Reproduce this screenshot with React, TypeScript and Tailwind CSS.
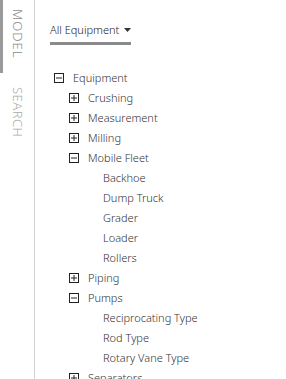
import { ReactNode } from "react";

type Node = { name: string; children?: Node[]; open?: boolean };

const TREE: Node = {
  name: "Equipment",
  open: true,
  children: [
    { name: "Crushing", children: [] },
    { name: "Measurement", children: [] },
    { name: "Milling", children: [] },
    {
      name: "Mobile Fleet",
      open: true,
      children: [
        { name: "Backhoe" },
        { name: "Dump Truck" },
        { name: "Grader" },
        { name: "Loader" },
        { name: "Rollers" },
      ],
    },
    { name: "Piping", children: [] },
    {
      name: "Pumps",
      open: true,
      children: [
        { name: "Reciprocating Type" },
        { name: "Rod Type" },
        { name: "Rotary Vane Type" },
      ],
    },
    { name: "Separators", children: [] },
  ],
};

function Toggle({ open }: { open: boolean }) {
  return (
    <svg width="10" height="10" viewBox="0 0 10 10" className="shrink-0">
      <rect x="0.5" y="0.5" width="9" height="9" fill="white" stroke="#222" />
      <line x1="2" y1="5" x2="8" y2="5" stroke="#222" />
      {!open && <line x1="5" y1="2" x2="5" y2="8" stroke="#222" />}
    </svg>
  );
}

function TreeNode({ node }: { node: Node }): ReactNode {
  const hasKids = node.children !== undefined;
  return (
    <li>
      <div className="flex items-center h-5 gap-[9px]">
        {hasKids ? <Toggle open={!!node.open} /> : <span className="w-[10px] shrink-0" />}
        <span className="text-[11px] font-light text-[#333] whitespace-nowrap">{node.name}</span>
      </div>
      {node.open && node.children && (
        <ul className="pl-[15px]">
          {node.children.map((c) => (
            <TreeNode key={c.name} node={c} />
          ))}
        </ul>
      )}
    </li>
  );
}

export default function App() {
  return (
    <div
      className="w-[286px] h-[379px] flex bg-white overflow-hidden"
      style={{ fontFamily: '"Segoe UI", "Noto Sans", sans-serif' }}
    >
      {/* side tabs */}
      <div className="w-[35px] shrink-0 border-r border-[#d4d4d4] flex flex-col">
        <div className="relative h-[74px] flex justify-center pt-[9px]">
          <div className="absolute left-0 top-0 w-[3px] h-[73px] bg-[#9a9a9a]" />
          <span className="[writing-mode:vertical-rl] text-[13px] font-light tracking-[1px] text-[#8a8a8a]">MODEL</span>
        </div>
        <div className="flex justify-center pt-[13px]">
          <span className="[writing-mode:vertical-rl] text-[13px] font-light tracking-[0.5px] text-[#aaa]">SEARCH</span>
        </div>
      </div>

      {/* content */}
      <div className="flex-1 pl-[15px] pt-[21px]">
        <div className="flex items-center gap-[5px] h-[18px]">
          <span className="text-[11px] font-light text-[#222] whitespace-nowrap">All Equipment</span>
          <svg width="7" height="4" viewBox="0 0 7 4" className="shrink-0">
            <path d="M0 0 H7 L3.5 4 Z" fill="#333" />
          </svg>
        </div>
        <div className="mt-[3px] w-[81px] h-[3px] bg-[#8a8a8a]" />

        <ul className="mt-[23px] pl-[4px]">
          <TreeNode node={TREE} />
        </ul>
      </div>
    </div>
  );
}
